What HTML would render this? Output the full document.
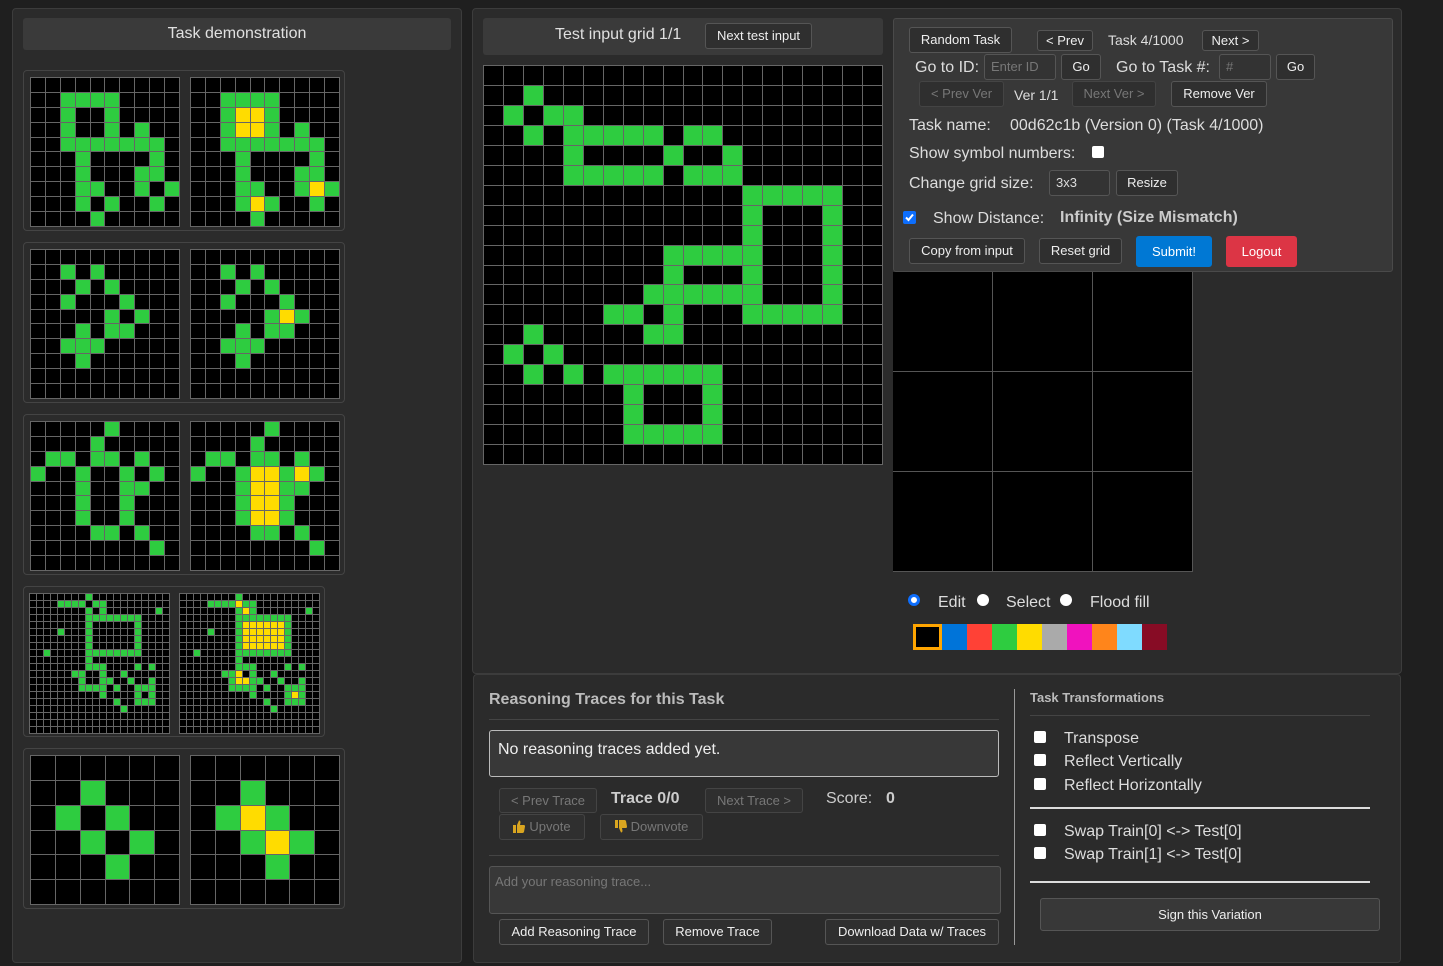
<!DOCTYPE html>
<html><head><meta charset="utf-8">
<style>
*{box-sizing:border-box;margin:0;padding:0}
body{width:1443px;height:966px;background:#1f1f1f;font-family:"Liberation Sans",sans-serif;color:#ddd;position:relative;overflow:hidden;font-size:14px}
.abs{position:absolute}
.panel{background:#2b2b2b;border:1px solid #3c3c3c;border-radius:4px}
.hdr{background:#3a3a3a;border-radius:3px;color:#e0e0e0;font-size:16px;text-align:center}
.pair{background:#2b2b2b;border:1px solid #444;border-radius:4px}
.g{position:absolute;display:grid;gap:1px;background:#666;border:1px solid #666}
.g div{background:#000}
.g .G{background:#2ecc40}
.g .Y{background:#ffdc00}
.btn{position:absolute;border:1px solid #555;border-radius:3px;background:#2f2f2f;color:#eee;font-size:13px;text-align:center;line-height:24px;height:26px}
.dis{color:#777;border-color:#444}
.t{position:absolute;white-space:nowrap}
.inp{position:absolute;border:1px solid #555;border-radius:3px;background:#333;color:#777;font-size:13px;padding-left:6px;line-height:24px;height:26px}
.cb{position:absolute;width:12px;height:12px;background:#fff;border-radius:2px}
.ic{display:inline-block;vertical-align:-2px;margin-right:4px}
</style></head><body>

<div class="abs panel" style="left:12px;top:8px;width:450px;height:955px"></div>
<div class="abs hdr" style="left:23px;top:18px;width:428px;height:32px;line-height:32px">Task demonstration</div>
<div class="abs pair" style="left:23px;top:70px;width:322px;height:161px"></div>
<div class="abs pair" style="left:23px;top:242px;width:322px;height:161px"></div>
<div class="abs pair" style="left:23px;top:414px;width:322px;height:161px"></div>
<div class="abs pair" style="left:23px;top:586px;width:302px;height:151px"></div>
<div class="abs pair" style="left:23px;top:748px;width:322px;height:161px"></div>

<div class="abs panel" style="left:472px;top:8px;width:930px;height:666px"></div>
<div class="abs hdr" style="left:483px;top:18px;width:400px;height:37px"></div>
<div class="t" style="left:555px;top:26px;font-size:16px;color:#e0e0e0">Test input grid 1/1</div>
<div class="btn" style="left:705px;top:23px;width:107px">Next test input</div>

<div class="abs" style="left:893px;top:18px;width:500px;height:254px;background:#383838;border:1px solid #4a4a4a;border-radius:3px"></div>
<div class="btn" style="left:909px;top:27px;width:103px">Random Task</div>
<div class="btn" style="left:1037px;top:30px;width:56px;height:21px;line-height:19px">&lt; Prev</div>
<div class="t" style="left:1108px;top:32px;font-size:14px">Task 4/1000</div>
<div class="btn" style="left:1202px;top:30px;width:57px;height:21px;line-height:19px">Next &gt;</div>
<div class="t" style="left:915px;top:59px;font-size:16px">Go to ID:</div>
<div class="inp" style="left:984px;top:54px;width:72px">Enter ID</div>
<div class="btn" style="left:1061px;top:54px;width:40px">Go</div>
<div class="t" style="left:1116px;top:59px;font-size:16px">Go to Task #:</div>
<div class="inp" style="left:1219px;top:54px;width:52px">#</div>
<div class="btn" style="left:1276px;top:54px;width:39px">Go</div>
<div class="btn dis" style="left:919px;top:81px;width:85px">&lt; Prev Ver</div>
<div class="t" style="left:1014px;top:87px;font-size:14px">Ver 1/1</div>
<div class="btn dis" style="left:1072px;top:81px;width:84px">Next Ver &gt;</div>
<div class="btn" style="left:1171px;top:81px;width:96px">Remove Ver</div>
<div class="t" style="left:909px;top:117px;font-size:16px">Task name:</div>
<div class="t" style="left:1010px;top:117px;font-size:16px">00d62c1b (Version 0) (Task 4/1000)</div>
<div class="t" style="left:909px;top:145px;font-size:16px">Show symbol numbers:</div>
<div class="cb" style="left:1092px;top:146px"></div>
<div class="t" style="left:909px;top:175px;font-size:16px">Change grid size:</div>
<div class="inp" style="left:1049px;top:170px;width:61px;color:#ddd">3x3</div>
<div class="btn" style="left:1116px;top:170px;width:62px">Resize</div>
<svg class="abs" style="left:903px;top:211px" width="13" height="13"><rect width="13" height="13" rx="2" fill="#0d6efd"/><path d="M3 6.5 L5.5 9 L10 3.5" stroke="#fff" stroke-width="2" fill="none"/></svg>
<div class="t" style="left:933px;top:210px;font-size:16px">Show Distance:</div>
<div class="t" style="left:1060px;top:209px;font-size:16px;font-weight:bold;color:#ccc">Infinity (Size Mismatch)</div>
<div class="btn" style="left:909px;top:238px;width:116px">Copy from input</div>
<div class="btn" style="left:1039px;top:238px;width:83px">Reset grid</div>
<div class="btn" style="left:1136px;top:236px;width:76px;height:31px;line-height:30px;background:#0078d4;border-color:#0078d4;color:#fff">Submit!</div>
<div class="btn" style="left:1226px;top:236px;width:71px;height:31px;line-height:30px;background:#dc3545;border-color:#dc3545;color:#fff">Logout</div>

<div class="abs" style="left:893px;top:272px;width:300px;height:300px;background:#000;
background-image:linear-gradient(to right,transparent 99px,#555 99px,#555 100px,transparent 100px),linear-gradient(to bottom,transparent 99px,#555 99px,#555 100px,transparent 100px);background-size:100px 100px"></div>

<div class="abs" style="left:908px;top:594px;width:12px;height:12px;border-radius:50%;background:#fff;border:3px solid #0d6efd"></div>
<div class="t" style="left:938px;top:594px;font-size:16px">Edit</div>
<div class="abs" style="left:977px;top:594px;width:12px;height:12px;border-radius:50%;background:#fff"></div>
<div class="t" style="left:1006px;top:594px;font-size:16px">Select</div>
<div class="abs" style="left:1060px;top:594px;width:12px;height:12px;border-radius:50%;background:#fff"></div>
<div class="t" style="left:1090px;top:594px;font-size:16px">Flood fill</div>
<div class="abs" style="left:913px;top:624px;display:flex;height:26px">
<div style="width:29px;background:#000;border:3px solid #ffa500"></div>
<div style="width:25px;background:#0074d9"></div><div style="width:25px;background:#ff4136"></div>
<div style="width:25px;background:#2ecc40"></div><div style="width:25px;background:#ffdc00"></div>
<div style="width:25px;background:#aaa"></div><div style="width:25px;background:#f012be"></div>
<div style="width:25px;background:#ff851b"></div><div style="width:25px;background:#7fdbff"></div>
<div style="width:25px;background:#870c25"></div></div>

<div class="abs panel" style="left:473px;top:674px;width:928px;height:289px"></div>
<div class="t" style="left:489px;top:691px;font-size:16px;font-weight:bold;color:#bbb">Reasoning Traces for this Task</div>
<div class="abs" style="left:489px;top:719px;width:510px;height:1px;background:#444"></div>
<div class="abs" style="left:489px;top:730px;width:510px;height:47px;border:1px solid #bbb;border-radius:3px;background:#383838"></div>
<div class="t" style="left:498px;top:741px;font-size:16px;color:#eee">No reasoning traces added yet.</div>
<div class="btn dis" style="left:499px;top:788px;width:98px;height:25px;line-height:23px">&lt; Prev Trace</div>
<div class="t" style="left:611px;top:790px;font-size:16px;font-weight:bold;color:#ccc">Trace 0/0</div>
<div class="btn dis" style="left:705px;top:788px;width:98px;height:25px;line-height:23px">Next Trace &gt;</div>
<div class="t" style="left:826px;top:790px;font-size:16px;color:#ccc">Score:</div>
<div class="t" style="left:886px;top:790px;font-size:16px;font-weight:bold;color:#ccc">0</div>
<div class="btn dis" style="left:499px;top:814px;width:86px;height:26px"><svg class="ic" width="12" height="13" viewBox="0 0 12 13"><rect x="0" y="5" width="3" height="8" fill="#d9a520"/><path d="M4 5 L6 0.5 Q7.5 0.5 7.5 2.5 L7 5 L11 5 Q12 5 12 6.5 L11 12 Q10.5 13 9.5 13 L4 13 Z" fill="#d9a520"/></svg>Upvote</div>
<div class="btn dis" style="left:600px;top:814px;width:103px;height:26px"><svg class="ic" width="12" height="13" viewBox="0 0 12 13" style="transform:scaleY(-1)"><rect x="0" y="5" width="3" height="8" fill="#d9a520"/><path d="M4 5 L6 0.5 Q7.5 0.5 7.5 2.5 L7 5 L11 5 Q12 5 12 6.5 L11 12 Q10.5 13 9.5 13 L4 13 Z" fill="#d9a520"/></svg>Downvote</div>
<div class="abs" style="left:489px;top:855px;width:510px;height:1px;background:#444"></div>
<div class="abs" style="left:489px;top:866px;width:512px;height:48px;border:1px solid #555;border-radius:3px;background:#383838"></div>
<div class="t" style="left:495px;top:874px;font-size:13px;color:#777">Add your reasoning trace...</div>
<div class="btn" style="left:499px;top:919px;width:150px">Add Reasoning Trace</div>
<div class="btn" style="left:663px;top:919px;width:109px">Remove Trace</div>
<div class="btn" style="left:825px;top:919px;width:174px">Download Data w/ Traces</div>

<div class="abs" style="left:1014px;top:689px;width:1px;height:256px;background:#999"></div>
<div class="t" style="left:1030px;top:690px;font-size:13px;font-weight:bold;color:#bbb">Task Transformations</div>
<div class="abs" style="left:1030px;top:715px;width:340px;height:1px;background:#444"></div>
<div class="cb" style="left:1034px;top:731px"></div><div class="t" style="left:1064px;top:730px;font-size:16px">Transpose</div>
<div class="cb" style="left:1034px;top:754px"></div><div class="t" style="left:1064px;top:753px;font-size:16px">Reflect Vertically</div>
<div class="cb" style="left:1034px;top:778px"></div><div class="t" style="left:1064px;top:777px;font-size:16px">Reflect Horizontally</div>
<div class="abs" style="left:1030px;top:807px;width:340px;height:2px;background:#ddd"></div>
<div class="cb" style="left:1034px;top:824px"></div><div class="t" style="left:1064px;top:823px;font-size:16px">Swap Train[0] &lt;-&gt; Test[0]</div>
<div class="cb" style="left:1034px;top:847px"></div><div class="t" style="left:1064px;top:846px;font-size:16px">Swap Train[1] &lt;-&gt; Test[0]</div>
<div class="abs" style="left:1030px;top:881px;width:340px;height:2px;background:#ddd"></div>
<div class="btn" style="left:1040px;top:898px;width:340px;height:33px;line-height:32px;background:#383838;font-size:13px">Sign this Variation</div>

<div id="grids"></div>
<script>
function grid(x,y,size,n,green,yellow){
  var d=document.createElement('div');d.className='g';
  d.style.cssText='left:'+x+'px;top:'+y+'px;width:'+size+'px;height:'+size+'px;grid-template-columns:repeat('+n+',1fr);grid-template-rows:repeat('+n+',1fr)';
  var G={},Y={};
  green.forEach(function(r,i){r.forEach(function(c){G[i+','+c]=1})});
  (yellow||[]).forEach(function(p){Y[p[0]+','+p[1]]=1});
  for(var r=0;r<n;r++)for(var c=0;c<n;c++){var e=document.createElement('div');
    if(Y[r+','+c])e.className='Y';else if(G[r+','+c])e.className='G';d.appendChild(e);}
  document.getElementById('grids').appendChild(d);
}
var p1=[[],[2,3,4,5],[2,5],[2,5,7],[2,3,4,5,6,7,8],[3,8],[3,7,8],[3,4,7,9],[3,5,8],[4]];
grid(30,77,150,10,p1);grid(190,77,150,10,p1,[[2,3],[2,4],[3,3],[3,4],[7,8],[8,4]]);
var p2=[[],[2,4],[3,5],[2,6],[5,7],[3,5,6],[2,3,4],[3],[],[]];
grid(30,249,150,10,p2);grid(190,249,150,10,p2,[[4,6]]);
var p3=[[5],[4],[1,2,4,5,7],[0,3,6,8],[3,6,7],[3,6],[3,6],[4,5,7],[8],[]];
grid(30,421,150,10,p3);grid(190,421,150,10,p3,[[3,4],[3,5],[3,7],[4,4],[4,5],[5,4],[5,5],[6,4],[6,5]]);
var p4=[[8],[4,5,6,7,9,10],[8,10,18],[8,9,10,11,12,13,14,15],[8,15],[4,8,15],[8,15],[8,15],[2,8,9,10,11,12,13,14,15],[8],[8,9,10,15,17],[6,7,10,13],[7,10,11,14,17],[7,8,9,10,12,15,16,17],[10,15,17],[12,15,16,17],[13],[],[],[]];
var y4=[[1,8],[2,9],[11,8],[12,8],[12,9],[14,16]];
for(var r=4;r<=7;r++)for(var c=9;c<=14;c++)y4.push([r,c]);
grid(29,593,141,20,p4);grid(179,593,141,20,p4,y4);
var p5=[[],[2],[1,3],[2,4],[3],[]];
grid(30,755,150,6,p5);grid(190,755,150,6,p5,[[2,2],[3,3]]);
var t=[[],[2],[1,3,4],[2,4,5,6,7,8,10,11],[4,9,12],[4,5,6,7,8,10,11,12],[13,14,15,16,17],[13,17],[13,17],[9,10,11,12,13,17],[9,13,17],[8,9,10,11,12,13,17],[6,7,9,13,14,15,16,17],[2,8,9],[1,3],[2,4,6,7,8,9,10,11],[7,11],[7,11],[7,8,9,10,11],[]];
grid(483,65,400,20,t);
</script>
</body></html>
